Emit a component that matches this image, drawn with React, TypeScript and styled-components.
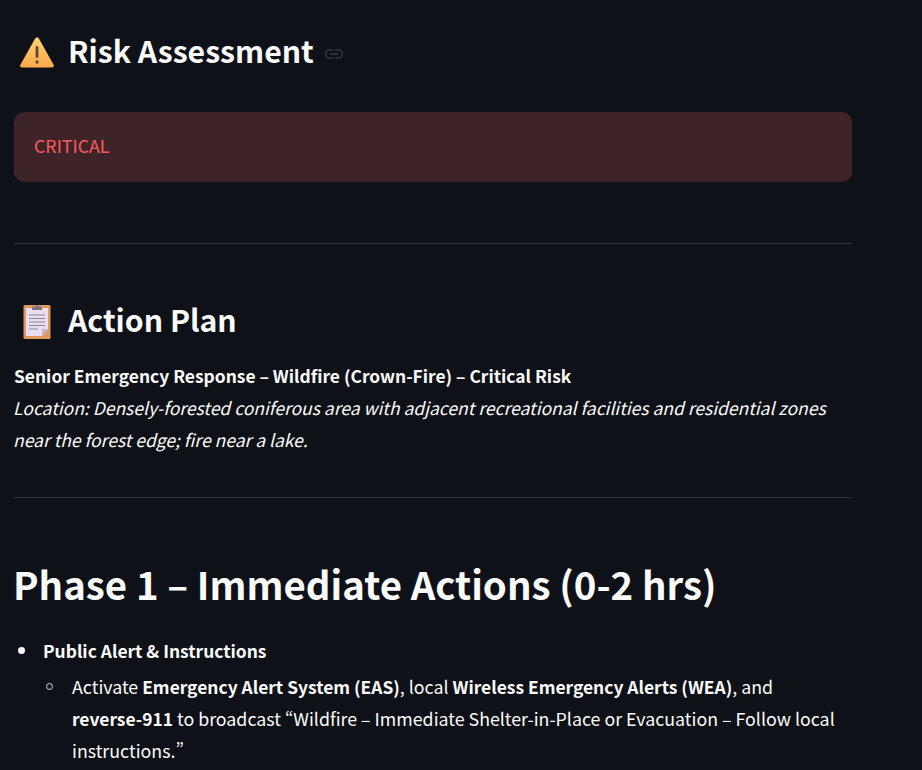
import React from "react";
import styled, { createGlobalStyle } from "styled-components";

const GlobalStyle = createGlobalStyle`
  html, body {
    margin: 0;
    padding: 0;
    background: #0e1117;
    overflow: hidden;
  }
  body {
    font-family: "Noto Sans CJK SC", "Noto Sans", sans-serif;
    font-feature-settings: "pwid" 1;
    color: #fafafa;
  }
`;

const WarningIcon = () => (
  <svg width="36" height="32" viewBox="0 0 36 32">
    <defs>
      <linearGradient id="warn" x1="0" y1="0" x2="0" y2="1">
        <stop offset="0" stopColor="#ffd36b" />
        <stop offset="1" stopColor="#ffa94d" />
      </linearGradient>
    </defs>
    <path
      d="M18 1.5c.9 0 1.6.5 2 1.2l14.6 26c.7 1.300-.2 2.800-1.700 2.800H3.100c-1.500 0-2.400-1.500-1.700-2.800L16 2.700c.4-.7 1.100-1.200 2-1.200z"
      fill="url(#warn)"
    />
    <rect x="16.600" y="10" width="2.800" height="12" rx="1.400" fill="#5c4a3a" />
    <circle cx="18" cy="26" r="1.700" fill="#5c4a3a" />
  </svg>
);

const ClipboardIcon = () => (
  <svg width="30" height="36" viewBox="0 0 30 36">
    <rect x="1.500" y="2" width="27" height="34" rx="1.500" fill="#e0995c" />
    <path d="M4 5h22v21l-6 7H4z" fill="#e8deef" />
    <path d="M26 26h-5a1 1 0 0 0-1 1v6z" fill="#c4b5cf" />
    <path d="M11.500 3.500h2.200a1.500 1.500 0 0 1 3 0H18.500a1.500 1.500 0 0 1 1.500 1.500v2h-10V5a1.500 1.500 0 0 1 1.500-1.500z" fill="#7b7480" />
    <path d="M7 12h16M7 15.500h16M7 19h16M7 22.500h16M7 26h9" stroke="#8d8795" strokeWidth="1" />
  </svg>
);

const LinkIcon = () => (
  <svg width="20" height="20" viewBox="0 0 24 24" fill="none" stroke="#30333b" strokeWidth="2.200" strokeLinecap="round">
    <path d="M10 7H7a5 5 0 0 0 0 10h3" />
    <path d="M14 7h3a5 5 0 0 1 0 10h-3" />
    <path d="M8 12h8" />
  </svg>
);

const Page = styled.main`
  width: 838px;
  padding: 13px 0 0 14px;
  line-height: 32px;
`;

const SectionHeading = styled.h2`
  display: flex;
  align-items: center;
  margin: 0;
  height: 77px;
  font-size: 30.200px;
  font-weight: 600;
  line-height: 1.2;
`;

const HeadingIcon = styled.span`
  display: flex;
  justify-content: center;
  width: 46px;
  margin-right: 8px;
`;

const HeadingText = styled.span`
  margin-top: -2px;
`;

const Anchor = styled.span`
  display: flex;
  margin-left: 10px;
  margin-top: 5px;
`;

const Alert = styled.div`
  height: 70px;
  margin-top: 22px;
  padding: 0 20px 4px;
  display: flex;
  align-items: center;
  box-sizing: border-box;
  border-radius: 10px;
  background: #3e2428;
  color: #ff5a5f;
  font-size: 17.800px;
`;

const Rule = styled.hr<{ $top: number; $bottom: number }>`
  border: none;
  border-top: 1px solid #32353c;
  margin: ${(p) => `${p.$top}px 0 ${p.$bottom}px`};
`;

const Paragraph = styled.p`
  margin: 1px 0 0 -1px;
  font-size: 17.500px;

  strong {
    font-size: 17.400px;
    margin-left: 1px;
  }
`;

const Title = styled.h1`
  margin: 0 0 0 -1px;
  font-size: 38.400px;
  font-weight: 600;
  line-height: 60px;
`;

const List = styled.ul<{ $nested?: boolean }>`
  margin: ${(p) => (p.$nested ? "0" : "21px 0 0")};
  padding: 0 0 0 29px;
  list-style: none;
  font-size: 17.800px;

  strong {
    font-size: 17.400px;
    line-height: 1;
  }
`;

const Item = styled.li<{ $nested?: boolean }>`
  position: relative;
  margin-top: 4px;

  &::before {
    content: "";
    position: absolute;
    box-sizing: border-box;
    left: ${(p) => (p.$nested ? "-26px" : "-25.500px")};
    top: 13px;
    width: 7px;
    height: 7px;
    border-radius: 50%;
    background: ${(p) => (p.$nested ? "transparent" : "#fafafa")};
    border: ${(p) => (p.$nested ? "1px solid #d8d8da" : "none")};
  }
`;

const NoBreak = styled.strong`
  white-space: nowrap;
`;

export default function App() {
  return (
    <Page>
      <GlobalStyle />
      <SectionHeading>
        <HeadingIcon>
          <WarningIcon />
        </HeadingIcon>
        <HeadingText>Risk Assessment</HeadingText>
        <Anchor>
          <LinkIcon />
        </Anchor>
      </SectionHeading>
      <Alert>CRITICAL</Alert>
      <Rule $top={61} $bottom={38} />
      <SectionHeading>
        <HeadingIcon>
          <ClipboardIcon />
        </HeadingIcon>
        <HeadingText>Action Plan</HeadingText>
      </SectionHeading>
      <Paragraph>
        <strong>Senior Emergency Response – Wildfire (Crown-Fire) – Critical Risk</strong>
        <br />
        <em>
          Location: Densely-forested coniferous area with adjacent recreational facilities and residential zones near
          the forest edge; fire near a lake.
        </em>
      </Paragraph>
      <Rule $top={41} $bottom={55} />
      <Title>Phase 1 – Immediate Actions (0-2 hrs)</Title>
      <List>
        <Item>
          <strong>Public Alert &amp; Instructions</strong>
          <List $nested>
            <Item $nested>
              Activate <strong>Emergency Alert System (EAS)</strong>, local{" "}
              <strong>Wireless Emergency Alerts (WEA)</strong>, and <NoBreak>reverse-911</NoBreak> to broadcast
              “Wildfire – Immediate Shelter-in-Place or Evacuation – Follow local instructions.”
            </Item>
          </List>
        </Item>
      </List>
    </Page>
  );
}
